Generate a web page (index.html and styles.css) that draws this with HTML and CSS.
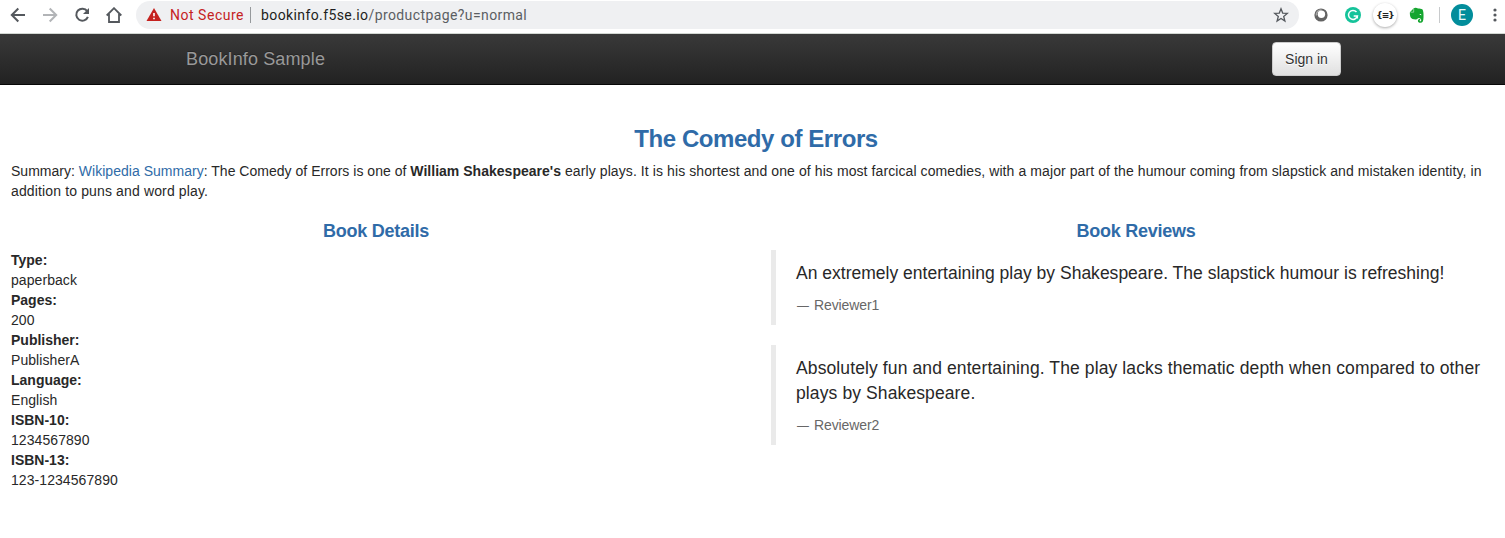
FILE: index.html
```html
<!DOCTYPE html>
<html lang="en">
<head>
<meta charset="utf-8">
<title>Simple Bookstore App</title>
<link rel="stylesheet" href="styles.css">
</head>
<body>
<div class="toolbar">
  <div class="nav-icons">
    <svg width="16" height="16" viewBox="0 0 16 16" fill="none" stroke="#54585d" stroke-width="2"><path d="M15 8H2.500M8.300 1.500 1.800 8l6.500 6.500"/></svg>
    <svg width="16" height="16" viewBox="0 0 16 16" fill="none" stroke="#b2b4b7" stroke-width="2"><path d="M1 8h12.500M7.700 1.500 14.200 8l-6.500 6.500"/></svg>
    <svg width="16" height="16" viewBox="0 0 16 16"><path fill="none" stroke="#54585d" stroke-width="2" d="M13.200 4.200A6 6 0 1 0 13.900 9.800"/><path fill="#54585d" d="M15 1v6H9z"/></svg>
    <svg width="16" height="16" viewBox="0 0 16 16" fill="none" stroke="#54585d" stroke-width="1.800"><path d="M.7 8.500 8 1.200l7.300 7.300M3 7v8h10V7"/></svg>
  </div>
  <div class="address">
    <svg class="warn" width="16" height="14" viewBox="0 0 16 14"><path fill="#c5221f" d="M8 0 15.500 13H.5z"/><path stroke="#fff" stroke-width="1.600" d="M8 5v3.300M8 9.700v1.500"/></svg>
    <span class="insecure">Not Secure</span>
    <span class="divider"></span>
    <span class="url"><span class="host">bookinfo.f5se.io</span>/productpage?u=normal</span>
    <svg class="star" width="16" height="16" viewBox="0 0 16 16" fill="none" stroke="#54585d" stroke-width="1.300"><path d="m8 1.800 1.700 4.300 4.600.3-3.600 3 1.200 4.600L8 11.500l-3.900 2.500 1.200-4.600-3.600-3 4.600-.3z"/></svg>
  </div>
  <div class="extensions">
    <svg width="14" height="14" viewBox="0 0 14 14"><circle cx="7" cy="7" r="6.600" fill="#636363"/><path d="M2.300 7.500A4.800 4.800 0 0 1 7.500 2" stroke="#a6a6a6" stroke-width="1.400" fill="none"/><circle cx="7.400" cy="6.300" r="3.700" fill="#fff"/></svg>
    <svg width="16" height="16" viewBox="0 0 16 16"><circle cx="8" cy="8" r="8" fill="#15c39a"/><path fill="none" stroke="#fff" stroke-width="1.500" d="M11.500 5A4.500 4.500 0 1 0 12.400 9H8.700M12.300 8.500v3"/></svg>
    <span class="braces">{≡}</span>
    <svg width="16" height="17" viewBox="0 0 16 17"><path fill="#14a52f" d="M4.700 1.200C5.500.5 8 .5 9 1.500c1.500.2 3.500.2 4.300.8 1.100 1 1.400 4.600 1.200 8.200-.1 3.300-.8 5.300-3 5.300-1.700 0-2.600-.7-2.600-2.100 0-1.300 1-1.900 2.300-1.800v1.300c-.8 0-1 .9-.1 1.100 1.200.2 1.500-1.600.7-2.400-.7-.7-1.900-.5-2.700-.9-.5 1-1.100 1.500-2.400 1.400-2.400-.1-4.300-.5-5-1.900C1 9 .7 6.700.9 5.300L4.700 1.200z"/><path stroke="#eefaf0" stroke-width=".5" fill="none" d="M1.500 5.200h3.200V1.500"/><path fill="#fff" d="M10.500 8c.2-1.200 1.700-1.200 2 .2-.7-.2-1.300-.3-2-.2z"/></svg>
  </div>
  <span class="separator"></span>
  <span class="avatar">E</span>
  <svg class="more" width="4" height="14" viewBox="0 0 4 14" fill="#54585d"><circle cx="2" cy="2" r="1.600"/><circle cx="2" cy="7" r="1.600"/><circle cx="2" cy="12" r="1.600"/></svg>
</div>
<nav class="navbar">
  <div class="container">
    <a class="brand">BookInfo Sample</a>
    <button class="sign-in">Sign in</button>
  </div>
</nav>
<main class="page">
  <h3>The Comedy of Errors</h3>
  <p class="summary"><span class="line-one"><span class="lead">Summary: <a>Wikipedia Summary</a>: The Comedy of Errors is one of <b>William Shakespeare's</b></span> early plays. It is his shortest and one of his most farcical comedies, with a major part of the humour coming from slapstick and mistaken identity, in</span> <span class="line-two">addition to puns and word play.</span></p>
  <div class="row">
    <section>
      <h4>Book Details</h4>
      <dl>
        <dt>Type:</dt><dd>paperback</dd>
        <dt>Pages:</dt><dd>200</dd>
        <dt>Publisher:</dt><dd>PublisherA</dd>
        <dt>Language:</dt><dd>English</dd>
        <dt>ISBN-10:</dt><dd>1234567890</dd>
        <dt>ISBN-13:</dt><dd>123-1234567890</dd>
      </dl>
    </section>
    <section>
      <h4>Book Reviews</h4>
      <blockquote>
        <p>An extremely entertaining play by Shakespeare. The slapstick humour is refreshing!</p>
        <small><span class="dash">—</span>Reviewer1</small>
      </blockquote>
      <blockquote class="wide">
        <p>Absolutely fun and entertaining. The play lacks thematic depth when compared to other plays by Shakespeare.</p>
        <small><span class="dash">—</span>Reviewer2</small>
      </blockquote>
    </section>
  </div>
</main>
</body>
</html>
```
FILE: styles.css
```css
* { box-sizing: border-box; }
body { margin: 0; overflow: hidden; background: #fff; color: #282828; font: 14px/20px "Liberation Sans", Arial, sans-serif; }
svg { display: block; flex: none; }
.toolbar { height: 34px; display: flex; align-items: flex-start; padding: 1px 0 0 10px; border-bottom: 1px solid #d3d8d3; font-family: Roboto, sans-serif; }
.nav-icons { display: flex; gap: 16px; padding-top: 6px; width: 126px; flex: none; }
.address { width: 1163px; flex: none; height: 28px; background: #eff0f2; border-radius: 14px; display: flex; align-items: center; padding: 0 10px; }
.warn { margin-right: 8px; }
.insecure { width: 80px; color: #c5221f; letter-spacing: .52px; white-space: nowrap; }
.divider { width: 1px; height: 16px; background: #96999c; margin-right: 10px; }
.url { color: #5b5e62; letter-spacing: .4px; }
.host { color: #1d1e20; }
.star { margin-left: auto; }
.extensions { display: flex; align-items: center; height: 28px; padding-left: 15px; gap: 17px; }
.braces { width: 24px; height: 24px; margin: 0 -5px; border-radius: 50%; background: #fff; box-shadow: 0 1px 3px #0005; color: #222; font: bold 9px/25px "DejaVu Sans", sans-serif; text-align: center; letter-spacing: -1px; }
.separator { flex: none; width: 1px; height: 16px; margin: 6px 11px 0 14px; background: #c8cacc; }
.avatar { flex: none; width: 22px; height: 22px; margin-top: 3px; border-radius: 50%; background: #028d9b; color: #e8fbfb; text-align: center; line-height: 22px; }
.more { margin: 7px 0 0 20px; }
.navbar { height: 51px; background: linear-gradient(#393939, #222); border-bottom: 1px solid #080808; }
.container { width: 1170px; margin-left: 171px; padding: 8px 0 0 15px; display: flex; justify-content: space-between; }
.brand { color: #999; font-size: 18px; line-height: 35px; height: 34px; letter-spacing: .13px; text-shadow: 0 -1px 0 #0004; }
.sign-in { width: 69px; height: 34px; padding: 0; border: 1px solid #ccc; border-radius: 4px; background: linear-gradient(#fff, #e0e0e0); color: #333; font: 14px "Liberation Sans", Arial, sans-serif; text-shadow: 0 1px 0 #fff; }
.page { padding: 41px 4px 0 11px; }
h3, h4 { margin: 0; color: #2f6ba8; text-align: center; line-height: 1.1; }
h3 { font-size: 24px; margin-bottom: 9px; letter-spacing: -.43px; }
h4 { font-size: 18px; margin: 11px 0 8px; letter-spacing: -.25px; }
a { color: #2f6ba8; }
.summary { margin: 0 0 10px; }
.line-one { display: block; white-space: nowrap; letter-spacing: .09px; }
.lead { letter-spacing: .02px; }
.line-two { letter-spacing: .14px; }
.row { display: grid; grid-template-columns: 730px 730px; gap: 30px; }
dl, dd { margin: 0; }
dt { font-weight: bold; }
dd { letter-spacing: .07px; }
blockquote { margin: 0 0 20px; padding: 11px 20px 10px; border-left: 5px solid #eaeaea; font-size: 17.500px; line-height: 25px; letter-spacing: .01px; }
.wide p { letter-spacing: .11px; margin-right: -10px; }
blockquote p { margin: 0 0 9px; }
small { display: block; font-size: 14px; line-height: 20px; color: #676767; letter-spacing: -.1px; }
.dash { display: inline-block; width: 12px; margin-right: 6px; transform: translateX(1px) scaleX(.85); transform-origin: left; }
```
